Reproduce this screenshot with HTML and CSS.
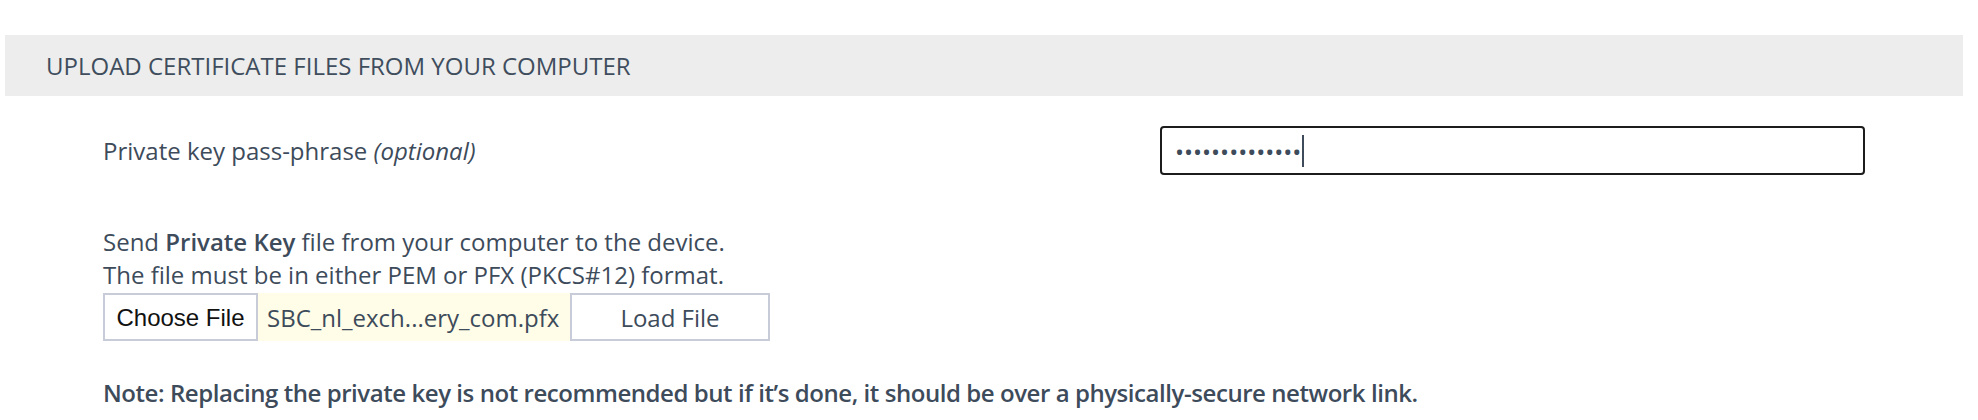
FILE: index.html
```html
<!DOCTYPE html>
<html lang="en">
<head>
<meta charset="utf-8">
<title>Upload certificate files</title>
<link rel="stylesheet" href="styles.css">
</head>
<body>
<div class="page">
  <div class="section-title">UPLOAD CERTIFICATE FILES FROM YOUR COMPUTER</div>
  <div class="section-body">
    <div class="field-row">
      <label class="field-label">Private key pass-phrase <em>(optional)</em></label>
      <div class="text-input" role="textbox"><span class="dots">••••••••••••••</span><span class="caret"></span></div>
    </div>
    <div class="upload">
      <p class="upload-text">Send <strong>Private Key</strong> file from your computer to the device.<br>The file must be in either PEM or PFX (PKCS#12) format.</p>
      <div class="file-row">
        <span class="choose-btn">Choose File</span>
        <span class="file-name">SBC_nl_exch...ery_com.pfx</span>
        <span class="load-btn">Load File</span>
      </div>
    </div>
    <p class="note">Note: Replacing the private key is not recommended but if it’s done, it should be over a physically-secure network link.</p>
  </div>
</div>
</body>
</html>
```

FILE: styles.css
```css
html, body {
  margin: 0;
  padding: 0;
  background: #ffffff;
}

body {
  font-family: "Open Sans", "Liberation Sans", sans-serif;
  color: #3d4b5b;
  font-size: 24px;
}

.page {
  padding: 35px 15px 0 5px;
}

.section-title {
  background: #ededed;
  height: 61px;
  display: flex;
  align-items: center;
  padding-left: 41px;
  font-size: 24px;
  color: #3f4d5d;
}

.section-body {
  padding-left: 98px;
}

.field-row {
  display: flex;
  align-items: center;
  margin-top: 30px;
  height: 49px;
}

.field-label {
  width: 1057px;
  line-height: 33px;
}

.field-label em {
  font-style: italic;
}

.text-input {
  box-sizing: border-box;
  width: 705px;
  height: 49px;
  border: 2px solid #1c1c1c;
  border-radius: 4px;
  display: flex;
  align-items: center;
  padding-left: 13px;
}

.dots {
  font-family: "Open Sans", sans-serif;
  font-size: 24px;
  letter-spacing: 0;
  color: #3d4b5b;
  line-height: 1;
  padding-top: 2px;
}

.caret {
  display: inline-block;
  width: 2px;
  height: 32px;
  background: #3d4b5b;
  margin-left: 1px;
}

.upload {
  margin-top: 50px;
}

.upload-text {
  margin: 0;
  line-height: 33px;
}

.upload-text strong {
  font-weight: 600;
}

.file-row {
  display: flex;
  margin-top: 2px;
  height: 48px;
}

.choose-btn {
  box-sizing: border-box;
  width: 155px;
  border: 2px solid #c8cbd8;
  background: #ffffff;
  font-family: "Liberation Sans", Arial, sans-serif;
  color: #111111;
  font-size: 24px;
  display: flex;
  align-items: center;
  justify-content: center;
  padding-top: 2px;
}

.file-name {
  box-sizing: border-box;
  width: 312px;
  background: #fffde7;
  display: flex;
  align-items: center;
  padding-left: 9px;
  white-space: nowrap;
  overflow: hidden;
}

.load-btn {
  box-sizing: border-box;
  width: 200px;
  border: 2px solid #c8cbd8;
  background: #ffffff;
  display: flex;
  align-items: center;
  justify-content: center;
}

.note {
  margin: 35px 0 0;
  line-height: 33px;
  font-weight: 600;
  letter-spacing: -0.44px;
}
```
